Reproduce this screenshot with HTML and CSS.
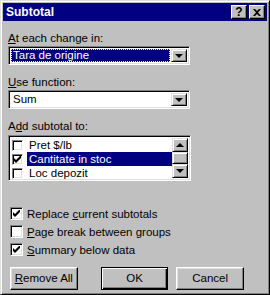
FILE: index.html
```html
<!DOCTYPE html>
<html lang="en">
<head>
    <meta charset="UTF-8">
    <title>Subtotal</title>
    <link rel="stylesheet" href="styles.css">
</head>
<body>
    <div class="window">
        <div class="titlebar">
            <span class="title">Subtotal</span>
            <div class="tbuttons">
                <div class="tbut help">?</div>
                <div class="tbut">
                    <svg width="8" height="7" viewBox="0 0 8 7"><path d="M0 0h2l2 2 2-2h2L5 3.5 8 7H6L4 5 2 7H0l3-3.5z" fill="#000"/></svg>
                </div>
            </div>
        </div>
        <div class="content">
            <div class="label"><u>A</u>t each change in:</div>
            <div class="combo">
                <div class="value"><span class="sel">Tara de origine</span></div>
                <div class="drop"><span class="arrow down"></span></div>
            </div>

            <div class="label"><u>U</u>se function:</div>
            <div class="combo">
                <div class="value plain">Sum</div>
                <div class="drop"><span class="arrow down"></span></div>
            </div>

            <div class="label">A<u>d</u>d subtotal to:</div>
            <div class="list">
                <div class="items">
                    <div class="item"><span class="box"></span><span class="txt">Pret $/lb</span></div>
                    <div class="item on"><span class="box checked"></span><span class="txt">Cantitate in stoc</span></div>
                    <div class="item"><span class="box"></span><span class="txt">Loc depozit</span></div>
                </div>
                <div class="scroll">
                    <div class="sbut"><span class="arrow up"></span></div>
                    <div class="thumb"></div>
                    <div class="sbut"><span class="arrow down"></span></div>
                </div>
            </div>

            <div class="checks">
                <div class="check"><span class="box checked"></span><span>Replace <u>c</u>urrent subtotals</span></div>
                <div class="check"><span class="box"></span><span><u>P</u>age break between groups</span></div>
                <div class="check"><span class="box checked"></span><span><u>S</u>ummary below data</span></div>
            </div>

            <div class="buttons">
                <div class="btn"><u>R</u>emove All</div>
                <div class="btn default">OK</div>
                <div class="btn">Cancel</div>
            </div>
        </div>
    </div>
</body>
</html>
```

FILE: styles.css
```css
body{
    margin:0;
    width:270px;
    height:295px;
    background:#c0c0c0;
    font-family:"Liberation Sans", Arial, sans-serif;
    font-size:11.5px;
    color:#000;
}
.window{
    box-sizing:border-box;
    width:270px;
    height:295px;
    background:#c0c0c0;
    border:1px solid;
    border-color:#dfdfdf #000 #000 #dfdfdf;
    box-shadow:inset 1px 1px #fff, inset -1px -1px #808080;
    padding:2px;
}
.titlebar{
    height:18px;
    background:#000080;
    display:flex;
    align-items:center;
    justify-content:space-between;
    padding:0 2px 0 3px;
}
.title{
    color:#fff;
    font-weight:bold;
    font-size:12px;
}
.tbuttons{
    display:flex;
    gap:2px;
}
.tbut{
    box-sizing:border-box;
    width:16px;
    height:14px;
    background:#c0c0c0;
    border:1px solid;
    border-color:#fff #000 #000 #fff;
    box-shadow:inset -1px -1px #808080;
    display:flex;
    align-items:center;
    justify-content:center;
}
.help{
    font-weight:bold;
    font-size:12px;
    line-height:12px;
}
.content{
    padding:10px 0 0 5px;
}
.label{
    height:14px;
    line-height:14px;
    margin-bottom:1px;
}
.combo{
    box-sizing:border-box;
    width:182px;
    height:19px;
    background:#fff;
    border:1px solid;
    border-color:#808080 #fff #fff #808080;
    box-shadow:inset 1px 1px #000, inset -1px -1px #dfdfdf;
    padding:2px;
    display:flex;
    margin-bottom:10px;
}
.value{
    flex:1;
    display:flex;
    margin-right:1px;
}
.sel{
    flex:1;
    background:#000080;
    color:#fff;
    outline:1px dotted #ffff80;
    outline-offset:-1px;
    line-height:13px;
    padding-left:2px;
}
.value.plain{
    line-height:13px;
    padding-left:2px;
}
.drop,.sbut{
    box-sizing:border-box;
    width:16px;
    background:#c0c0c0;
    border:1px solid;
    border-color:#dfdfdf #000 #000 #dfdfdf;
    box-shadow:inset 1px 1px #fff, inset -1px -1px #808080;
    display:flex;
    align-items:center;
    justify-content:center;
}
.arrow{
    width:0;
    height:0;
    border-left:4px solid transparent;
    border-right:4px solid transparent;
}
.arrow.down{
    border-top:4px solid #000;
}
.arrow.up{
    border-bottom:4px solid #000;
}
.list{
    box-sizing:border-box;
    width:183px;
    height:46px;
    background:#fff;
    border:1px solid;
    border-color:#808080 #fff #fff #808080;
    box-shadow:inset 1px 1px #000, inset -1px -1px #dfdfdf;
    padding:2px;
    display:flex;
    margin-top:2px;
}
.items{
    flex:1;
}
.item{
    height:14px;
    display:flex;
    align-items:center;
}
.item .box{
    width:11px;
    height:11px;
    margin:0 4px 0 1px;
}
.item .txt{
    flex:1;
    line-height:14px;
    padding-left:2px;
}
.item.on .txt{
    background:#000080;
    color:#fff;
}
.scroll{
    width:16px;
    display:flex;
    flex-direction:column;
}
.sbut{
    height:14px;
}
.thumb{
    flex:1;
    box-sizing:border-box;
    background:#c0c0c0;
    border:1px solid;
    border-color:#dfdfdf #000 #000 #dfdfdf;
    box-shadow:inset 1px 1px #fff, inset -1px -1px #808080;
}
.box{
    box-sizing:border-box;
    width:13px;
    height:13px;
    background:#fff;
    border:1px solid;
    border-color:#808080 #fff #fff #808080;
    box-shadow:inset 1px 1px #000, inset -1px -1px #dfdfdf;
    flex:none;
}
.box.checked{
    background:#fff url("data:image/svg+xml,%3Csvg xmlns='http://www.w3.org/2000/svg' width='7' height='7'%3E%3Cpath d='M0 2v3l2 2 5-5V-1L2 4z' fill='%23000'/%3E%3C/svg%3E") no-repeat center;
}
.checks{
    margin-top:26px;
    display:flex;
    flex-direction:column;
    gap:5px;
}
.check{
    height:13px;
    display:flex;
    align-items:center;
    gap:4px;
    padding-left:2px;
}
.buttons{
    margin-top:11px;
    display:flex;
    padding-left:2px;
}
.btn{
    box-sizing:border-box;
    width:73px;
    height:23px;
    line-height:21px;
    text-align:center;
    background:#c0c0c0;
    border:1px solid;
    border-color:#fff #000 #000 #fff;
    box-shadow:inset -1px -1px #808080, inset 1px 1px #dfdfdf;
    margin-right:23px;
}
.btn.default{
    border:1px solid #000;
    box-shadow:inset 1px 1px #fff, inset -1px -1px #000, inset -2px -2px #808080;
    margin-right:8px;
}
```
